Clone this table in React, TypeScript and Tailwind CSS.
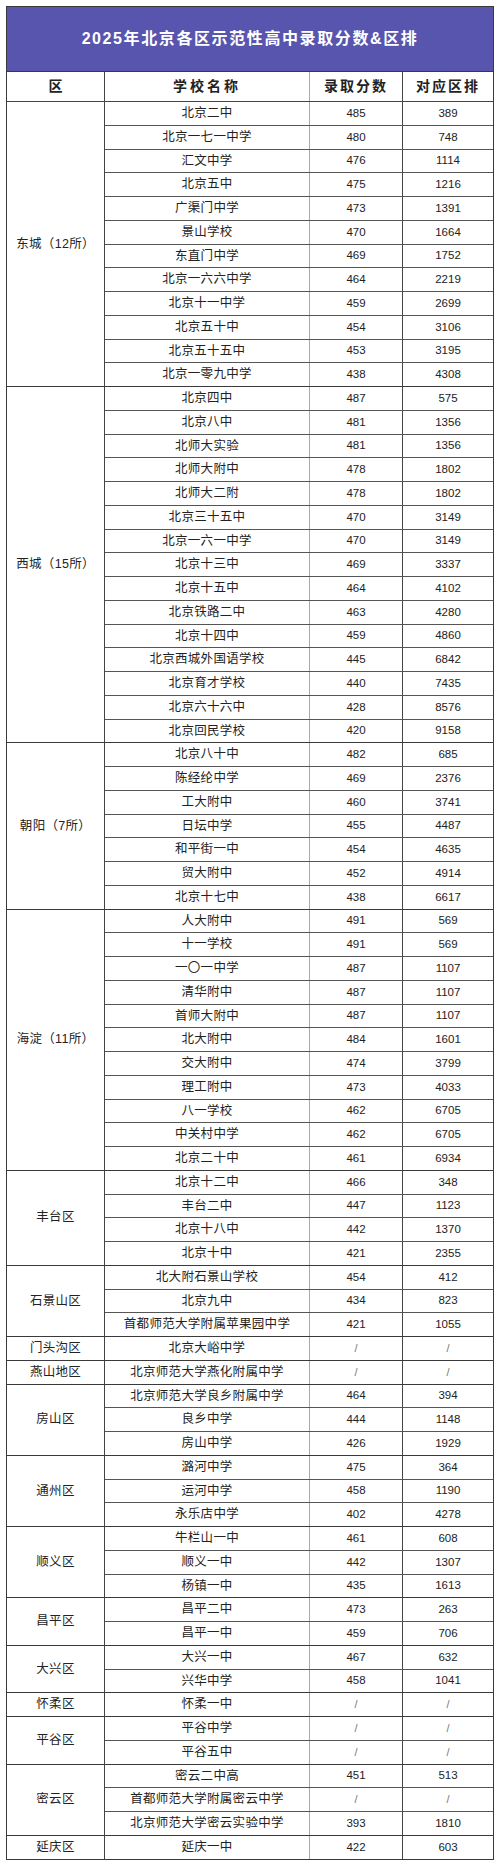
import React from "react";

type Row = [string, string, string];
type Group = { name: string; rows: Row[] };

const groups: Group[] = [
  {
    name: "东城（12所）",
    rows: [
      ["北京二中", "485", "389"],
      ["北京一七一中学", "480", "748"],
      ["汇文中学", "476", "1114"],
      ["北京五中", "475", "1216"],
      ["广渠门中学", "473", "1391"],
      ["景山学校", "470", "1664"],
      ["东直门中学", "469", "1752"],
      ["北京一六六中学", "464", "2219"],
      ["北京十一中学", "459", "2699"],
      ["北京五十中", "454", "3106"],
      ["北京五十五中", "453", "3195"],
      ["北京一零九中学", "438", "4308"],
    ],
  },
  {
    name: "西城（15所）",
    rows: [
      ["北京四中", "487", "575"],
      ["北京八中", "481", "1356"],
      ["北师大实验", "481", "1356"],
      ["北师大附中", "478", "1802"],
      ["北师大二附", "478", "1802"],
      ["北京三十五中", "470", "3149"],
      ["北京一六一中学", "470", "3149"],
      ["北京十三中", "469", "3337"],
      ["北京十五中", "464", "4102"],
      ["北京铁路二中", "463", "4280"],
      ["北京十四中", "459", "4860"],
      ["北京西城外国语学校", "445", "6842"],
      ["北京育才学校", "440", "7435"],
      ["北京六十六中", "428", "8576"],
      ["北京回民学校", "420", "9158"],
    ],
  },
  {
    name: "朝阳（7所）",
    rows: [
      ["北京八十中", "482", "685"],
      ["陈经纶中学", "469", "2376"],
      ["工大附中", "460", "3741"],
      ["日坛中学", "455", "4487"],
      ["和平街一中", "454", "4635"],
      ["贸大附中", "452", "4914"],
      ["北京十七中", "438", "6617"],
    ],
  },
  {
    name: "海淀（11所）",
    rows: [
      ["人大附中", "491", "569"],
      ["十一学校", "491", "569"],
      ["一〇一中学", "487", "1107"],
      ["清华附中", "487", "1107"],
      ["首师大附中", "487", "1107"],
      ["北大附中", "484", "1601"],
      ["交大附中", "474", "3799"],
      ["理工附中", "473", "4033"],
      ["八一学校", "462", "6705"],
      ["中关村中学", "462", "6705"],
      ["北京二十中", "461", "6934"],
    ],
  },
  {
    name: "丰台区",
    rows: [
      ["北京十二中", "466", "348"],
      ["丰台二中", "447", "1123"],
      ["北京十八中", "442", "1370"],
      ["北京十中", "421", "2355"],
    ],
  },
  {
    name: "石景山区",
    rows: [
      ["北大附石景山学校", "454", "412"],
      ["北京九中", "434", "823"],
      ["首都师范大学附属苹果园中学", "421", "1055"],
    ],
  },
  { name: "门头沟区", rows: [["北京大峪中学", "/", "/"]] },
  { name: "燕山地区", rows: [["北京师范大学燕化附属中学", "/", "/"]] },
  {
    name: "房山区",
    rows: [
      ["北京师范大学良乡附属中学", "464", "394"],
      ["良乡中学", "444", "1148"],
      ["房山中学", "426", "1929"],
    ],
  },
  {
    name: "通州区",
    rows: [
      ["潞河中学", "475", "364"],
      ["运河中学", "458", "1190"],
      ["永乐店中学", "402", "4278"],
    ],
  },
  {
    name: "顺义区",
    rows: [
      ["牛栏山一中", "461", "608"],
      ["顺义一中", "442", "1307"],
      ["杨镇一中", "435", "1613"],
    ],
  },
  {
    name: "昌平区",
    rows: [
      ["昌平二中", "473", "263"],
      ["昌平一中", "459", "706"],
    ],
  },
  {
    name: "大兴区",
    rows: [
      ["大兴一中", "467", "632"],
      ["兴华中学", "458", "1041"],
    ],
  },
  { name: "怀柔区", rows: [["怀柔一中", "/", "/"]] },
  {
    name: "平谷区",
    rows: [
      ["平谷中学", "/", "/"],
      ["平谷五中", "/", "/"],
    ],
  },
  {
    name: "密云区",
    rows: [
      ["密云二中高", "451", "513"],
      ["首都师范大学附属密云中学", "/", "/"],
      ["北京师范大学密云实验中学", "393", "1810"],
    ],
  },
  { name: "延庆区", rows: [["延庆一中", "422", "603"]] },
];

const font = {
  fontFamily: '"Liberation Sans", "Noto Sans CJK SC", sans-serif',
};

function Val({ v }: { v: string }) {
  if (v === "/") {
    return <span className="text-[#777] text-[11px]">/</span>;
  }
  return <span>{v}</span>;
}

export default function App() {
  return (
    <div className="w-[500px] h-[1868px] bg-white pt-[6px] pl-[6px]" style={font}>
      <div className="w-[488px] border border-[#3a3a3a] text-[#222]">
        <div className="h-[65px] bg-[#5855af] border-b border-[#3a3a3a] flex items-center justify-center text-white font-bold text-[16px] tracking-[1.6px]">
          2025年北京各区示范性高中录取分数&amp;区排
        </div>
        <div className="h-[30px] flex border-b border-[#444] font-bold text-[14px]">
          <div className="w-[98px] border-r border-[#444] flex items-center justify-center">区</div>
          <div className="w-[205px] border-r border-[#aaa] flex items-center justify-center tracking-[3px]">学校名称</div>
          <div className="w-[93px] border-r border-[#444] flex items-center justify-center tracking-[2px]">录取分数</div>
          <div className="flex-1 flex items-center justify-center tracking-[2px]">对应区排</div>
        </div>
        {groups.map((g, gi) => (
          <div
            key={g.name}
            className={
              "flex " + (gi < groups.length - 1 ? "border-b border-[#3a3a3a]" : "")
            }
          >
            <div className="w-[98px] shrink-0 border-r border-[#444] flex items-center justify-center text-[12.5px] tracking-[0.3px]">
              {g.name}
            </div>
            <div className="flex-1 flex flex-col">
              {g.rows.map((r, ri) => (
                <div
                  key={ri}
                  className={
                    "flex " +
                    (ri < g.rows.length - 1
                      ? "h-[23.75px] border-b border-[#555]"
                      : "h-[22.75px]")
                  }
                >
                  <div className="w-[205px] border-r border-[#aaa] flex items-center justify-center text-[12.5px] tracking-[0.3px]">
                    {r[0]}
                  </div>
                  <div className="w-[93px] border-r border-[#444] flex items-center justify-center text-[11.5px]">
                    <Val v={r[1]} />
                  </div>
                  <div className="flex-1 flex items-center justify-center text-[11.5px]">
                    <Val v={r[2]} />
                  </div>
                </div>
              ))}
            </div>
          </div>
        ))}
      </div>
    </div>
  );
}
